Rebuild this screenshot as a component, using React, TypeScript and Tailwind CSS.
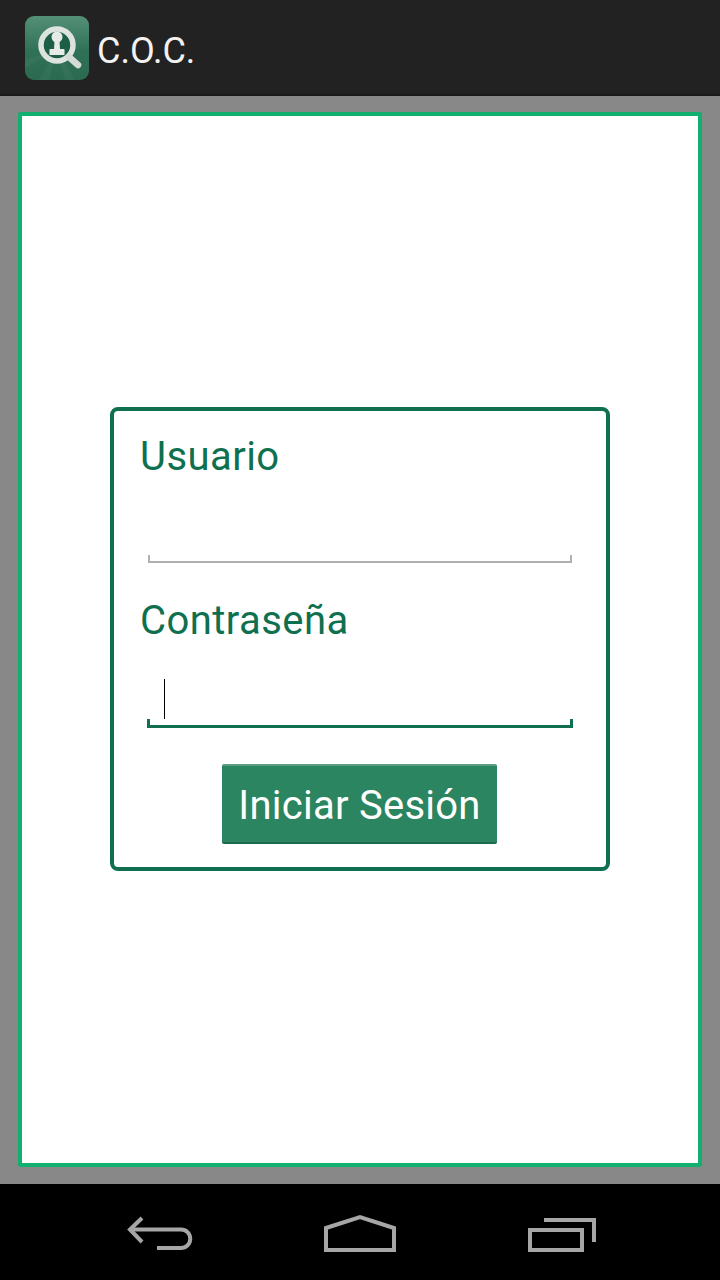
const font = { fontFamily: "Roboto, sans-serif" };

const AppIcon = () => (
  <svg width="64" height="64" viewBox="0 0 64 64" className="shrink-0">
    <defs>
      <linearGradient id="tile" x1="0" y1="0" x2="0" y2="1">
        <stop offset="0" stopColor="#558f78" />
        <stop offset="0.55" stopColor="#2f7157" />
        <stop offset="1" stopColor="#2a6a51" />
      </linearGradient>
    </defs>
    <rect width="64" height="64" rx="9" fill="url(#tile)" />
    <path d="M32 34 L14 64 H24 Z M32 34 L40 64 H50 Z M32 34 L0 44 V52 Z" fill="#ffffff" opacity="0.04" />
    <circle cx="32" cy="29" r="16" fill="#1c5f46" stroke="#dde4e0" strokeWidth="5.5" />
    <path d="M44 41 L53 49" stroke="#d5dcd8" strokeWidth="6.5" strokeLinecap="round" />
    <circle cx="32" cy="21" r="5.5" fill="#e6ebe8" />
    <path d="M29.5 25 H34.5 L35 33 H39 Q39.5 33 39.5 34 V39 H24.5 V34 Q24.5 33 25 33 H29 Z" fill="#e6ebe8" />
  </svg>
);

const BackIcon = () => (
  <svg width="68" height="40" viewBox="0 0 68 40" fill="none" stroke="#a6a6a6" strokeWidth="4">
    <path d="M16 4 L4 15.5 L16 28" />
    <path d="M4 15.5 H55 A9.25 9.25 0 0 1 55 34 H31" />
  </svg>
);

const HomeIcon = () => (
  <svg width="72" height="40" viewBox="0 0 72 40" fill="none" stroke="#a6a6a6" strokeWidth="4">
    <path d="M2 14 L36 3 L70 14 V36 H2 Z" />
  </svg>
);

const RecentsIcon = () => (
  <svg width="68" height="40" viewBox="0 0 68 40" fill="none" stroke="#a6a6a6" strokeWidth="4">
    <rect x="2" y="16" width="52" height="20" />
    <path d="M16 6 H66 V28" />
  </svg>
);

export default function App() {
  return (
    <div className="flex h-[1280px] w-[720px] flex-col bg-[#888888]" style={font}>
      <header className="flex h-[96px] items-center gap-[8px] border-b-2 border-[#191919] bg-[#222222] pl-[25px] pt-[2px]">
        <AppIcon />
        <span className="mt-[6px] text-[36px] leading-none text-[#f2f2f2]">C.O.C.</span>
      </header>

      <main className="flex flex-1 pb-[17px] pl-[18px] pr-[18px] pt-[16px]">
        <div className="flex flex-1 items-center justify-center rounded-[3px] border-[4px] border-[#10b16f] bg-white">
          <div className="mb-[1px] flex h-[464px] w-[500px] flex-col rounded-[8px] border-[4px] border-[#0f6f50] pl-[26px] pr-[27px] pt-[24px]">
            <label className="h-[44px] text-[40px] leading-[44px] tracking-[0.45px] text-[#0f7050]">Usuario</label>
            <div className="ml-[8px] mt-[76px] h-[8px] w-[424px] border-x-2 border-b-2 border-[#b0b0b0]" />

            <label className="mt-[36px] h-[44px] text-[40px] leading-[44px] tracking-[0.45px] text-[#0f7050]">Contraseña</label>
            <div className="ml-[7px] mt-[36px] flex h-[49px] w-[426px] items-start">
              <div className="ml-[17px] h-[40px] w-[1px] shrink-0 bg-black" />
            </div>
            <div className="-mt-[9px] ml-[7px] h-[9px] w-[426px] border-x-[3px] border-b-[3px] border-[#0f6f50]" />

            <button className="mx-auto mt-[36px] h-[80px] w-[275px] rounded-[2px] border-b-2 border-t-2 border-b-[#1f6a4c] border-t-[#5a9d82] bg-[#2b8560] pt-[3px] text-center text-[40px] leading-none tracking-[0.25px] text-white">
              Iniciar Sesión
            </button>
          </div>
        </div>
      </main>

      <nav className="flex h-[96px] items-start bg-black pl-[126px] pt-[30px]">
        <BackIcon />
        <div className="ml-[130px]">
          <HomeIcon />
        </div>
        <div className="ml-[132px]">
          <RecentsIcon />
        </div>
      </nav>
    </div>
  );
}
